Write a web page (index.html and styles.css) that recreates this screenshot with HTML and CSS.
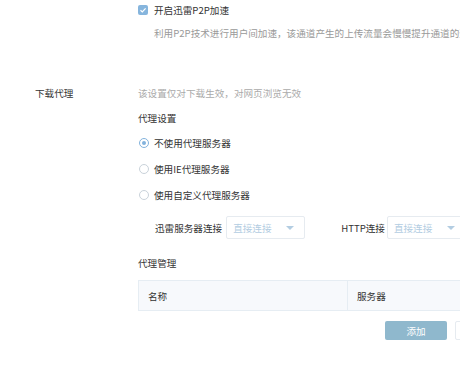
FILE: index.html
```html
<!DOCTYPE html>
<html lang="zh-CN">
<head>
    <meta charset="UTF-8">
    <title>下载代理设置</title>
    <link rel="stylesheet" href="styles.css">
</head>
<body>
    <div class="section">
        <div class="label"></div>
        <div class="content">
            <div class="line check-line">
                <span class="checkbox">
                    <svg width="8" height="8" viewBox="0 0 8 8"><path d="M1.5 4.2 L3.3 5.9 L6.6 2.3" fill="none" stroke="#fff" stroke-width="1.2"/></svg>
                </span>
                <span class="text">开启迅雷P2P加速</span>
            </div>
            <div class="line desc">利用P2P技术进行用户间加速，该通道产生的上传流量会慢慢提升通道的速度</div>
        </div>
    </div>

    <div class="section proxy">
        <div class="label line">下载代理</div>
        <div class="content">
            <div class="line hint">该设置仅对下载生效，对网页浏览无效</div>
            <div class="line subtitle">代理设置</div>
            <ul class="radios">
                <li class="radio-item checked"><span class="radio"></span>不使用代理服务器</li>
                <li class="radio-item"><span class="radio"></span>使用IE代理服务器</li>
                <li class="radio-item"><span class="radio"></span>使用自定义代理服务器</li>
            </ul>
            <div class="selects">
                <span class="select-label">迅雷服务器连接</span>
                <div class="select">
                    <span>直接连接</span>
                    <span class="arrow"></span>
                </div>
                <span class="select-label http">HTTP连接</span>
                <div class="select">
                    <span>直接连接</span>
                    <span class="arrow"></span>
                </div>
            </div>
            <div class="line subtitle manage">代理管理</div>
            <table class="proxy-table">
                <thead>
                    <tr>
                        <th class="col-name">名称</th>
                        <th>服务器</th>
                    </tr>
                </thead>
            </table>
            <div class="actions">
                <button class="btn primary">添加</button>
                <button class="btn ghost">删除</button>
            </div>
        </div>
    </div>
</body>
</html>
```

FILE: styles.css
```css
* {
    margin: 0;
    padding: 0;
    box-sizing: border-box;
}

html,
body {
    width: 460px;
    height: 365px;
    overflow: hidden;
    background: #fff;
}

body {
    font-family: "Microsoft YaHei", "Noto Sans CJK SC", sans-serif;
    font-size: 9.6px;
    color: #333;
}

.section {
    display: flex;
}

.label {
    width: 138px;
    flex-shrink: 0;
    padding-left: 35px;
    color: #333;
}

.content {
    width: 379px;
    flex-shrink: 0;
}

.line {
    height: 20px;
    line-height: 20px;
    white-space: nowrap;
}

.check-line {
    display: flex;
    align-items: center;
}

.checkbox {
    width: 10px;
    height: 10px;
    border-radius: 2px;
    background: #86b5dd;
    display: flex;
    align-items: center;
    justify-content: center;
    margin-right: 6px;
}

.desc {
    margin-top: 3px;
    padding-left: 16px;
    color: #999;
}

.proxy {
    margin-top: 40px;
}

.hint {
    color: #aaa;
}

.subtitle {
    margin-top: 5px;
}

.radios {
    list-style: none;
    margin-top: 2px;
}

.radio-item {
    height: 26px;
    display: flex;
    align-items: center;
    white-space: nowrap;
}

.radio {
    width: 10px;
    height: 10px;
    border: 1px solid #c9d2da;
    border-radius: 50%;
    margin: 0 5px 0 1px;
    display: flex;
    align-items: center;
    justify-content: center;
}

.radio-item.checked .radio {
    border-color: #82b2dc;
}

.radio-item.checked .radio::after {
    content: "";
    width: 4px;
    height: 4px;
    border-radius: 50%;
    background: #82b2dc;
}

.selects {
    display: flex;
    align-items: center;
    margin-top: 8px;
    padding-left: 17px;
    white-space: nowrap;
}

.select-label {
    margin-right: 4px;
}

.select-label.http {
    margin-left: 36px;
    margin-right: 2px;
}

.select {
    width: 79px;
    height: 23px;
    flex-shrink: 0;
    border: 1px solid #e6ebf0;
    border-radius: 2px;
    display: flex;
    align-items: center;
    justify-content: space-between;
    padding: 0 10px 0 6px;
    color: #b3cde2;
}

.arrow {
    width: 0;
    height: 0;
    border-left: 4px solid transparent;
    border-right: 4px solid transparent;
    border-top: 4px solid #b3cde2;
}

.manage {
    margin-top: 14px;
}

.proxy-table {
    width: 100%;
    margin-top: 7px;
    border-collapse: collapse;
    table-layout: fixed;
}

.proxy-table th {
    height: 30px;
    background: #f7f9fc;
    border: 1px solid #e6edf3;
    font-weight: normal;
    text-align: left;
    padding-left: 9px;
    color: #333;
}

.proxy-table .col-name {
    width: 209px;
}

.actions {
    display: flex;
    justify-content: flex-end;
    gap: 8px;
    margin-top: 10px;
}

.btn {
    width: 62px;
    height: 19px;
    border-radius: 2px;
    font-family: inherit;
    font-size: 9.6px;
    border: 1px solid transparent;
}

.primary {
    background: #8fb8cd;
    color: #fff;
}

.ghost {
    background: #fff;
    border-color: #e6ebf0;
    color: #999;
}
```
